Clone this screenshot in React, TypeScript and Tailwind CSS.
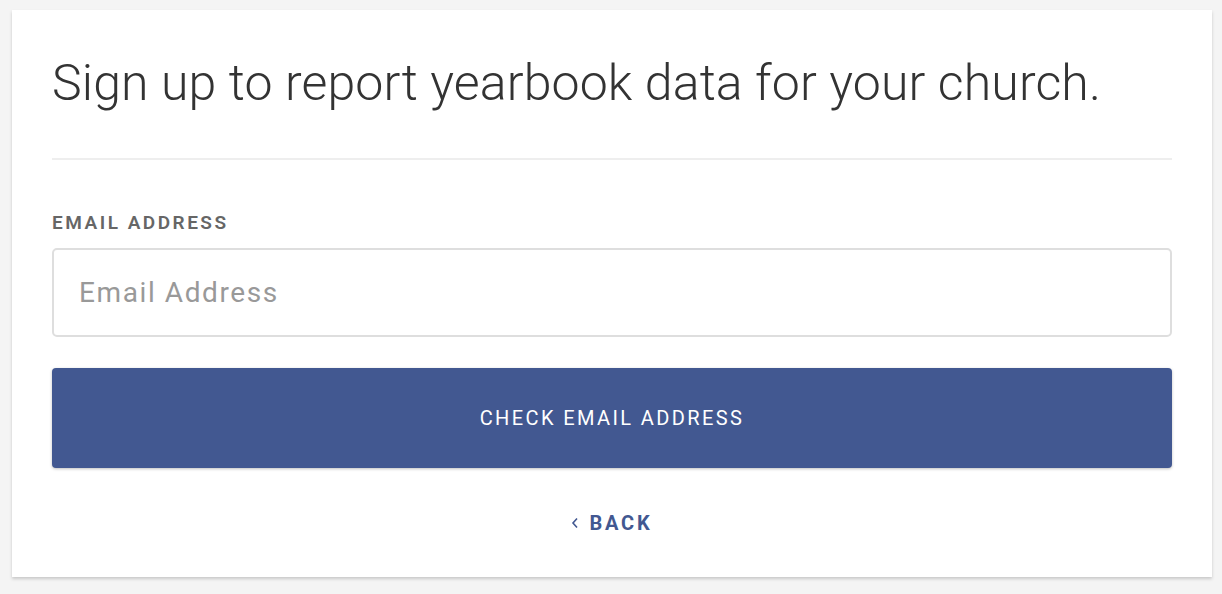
export default function App() {
  return (
    <div
      className="min-h-[594px] bg-[#f4f4f4] pl-3 pr-[10px] pt-[10px] pb-4"
      style={{ fontFamily: 'Roboto, "Liberation Sans", sans-serif' }}
    >
      <div className="bg-white shadow-[0_2px_3px_rgba(0,0,0,0.18)] px-10 pt-[43px] pb-[42px]">
        <h1 className="text-[50px] font-light leading-[60px] tracking-[0.13px] text-[#333]">
          Sign up to report yearbook data for your church.
        </h1>
        <hr className="mt-[45px] border-t-2 border-[#eeeeee]" />
        <label className="mt-[53px] block text-[19px] font-semibold uppercase tracking-[2.5px] leading-5 text-[#666]">
          Email Address
        </label>
        <input
          type="text"
          placeholder="Email Address"
          className="mt-[15px] block h-[89px] w-full rounded-[5px] border-2 border-[#dedede] px-[25px] text-[28px] tracking-[1.6px] text-[#333] placeholder:text-[#999] outline-none"
        />
        <button className="mt-[31px] block h-[100px] w-full rounded-[4px] bg-[#425891] text-[20px] uppercase tracking-[2.4px] text-white shadow-[0_1px_3px_rgba(0,0,0,0.25)]">
          Check Email Address
        </button>
        <div className="mt-[43px] flex justify-center">
          <button className="flex items-center gap-[10px] text-[20px] leading-6 font-bold uppercase tracking-[2.8px] text-[#425891]">
            <svg width="8" height="12" viewBox="0 0 8 12" fill="none">
              <path d="M6 1.5 L2 6 L6 10.5" stroke="#425891" strokeWidth="1.6" />
            </svg>
            Back
          </button>
        </div>
      </div>
    </div>
  );
}
